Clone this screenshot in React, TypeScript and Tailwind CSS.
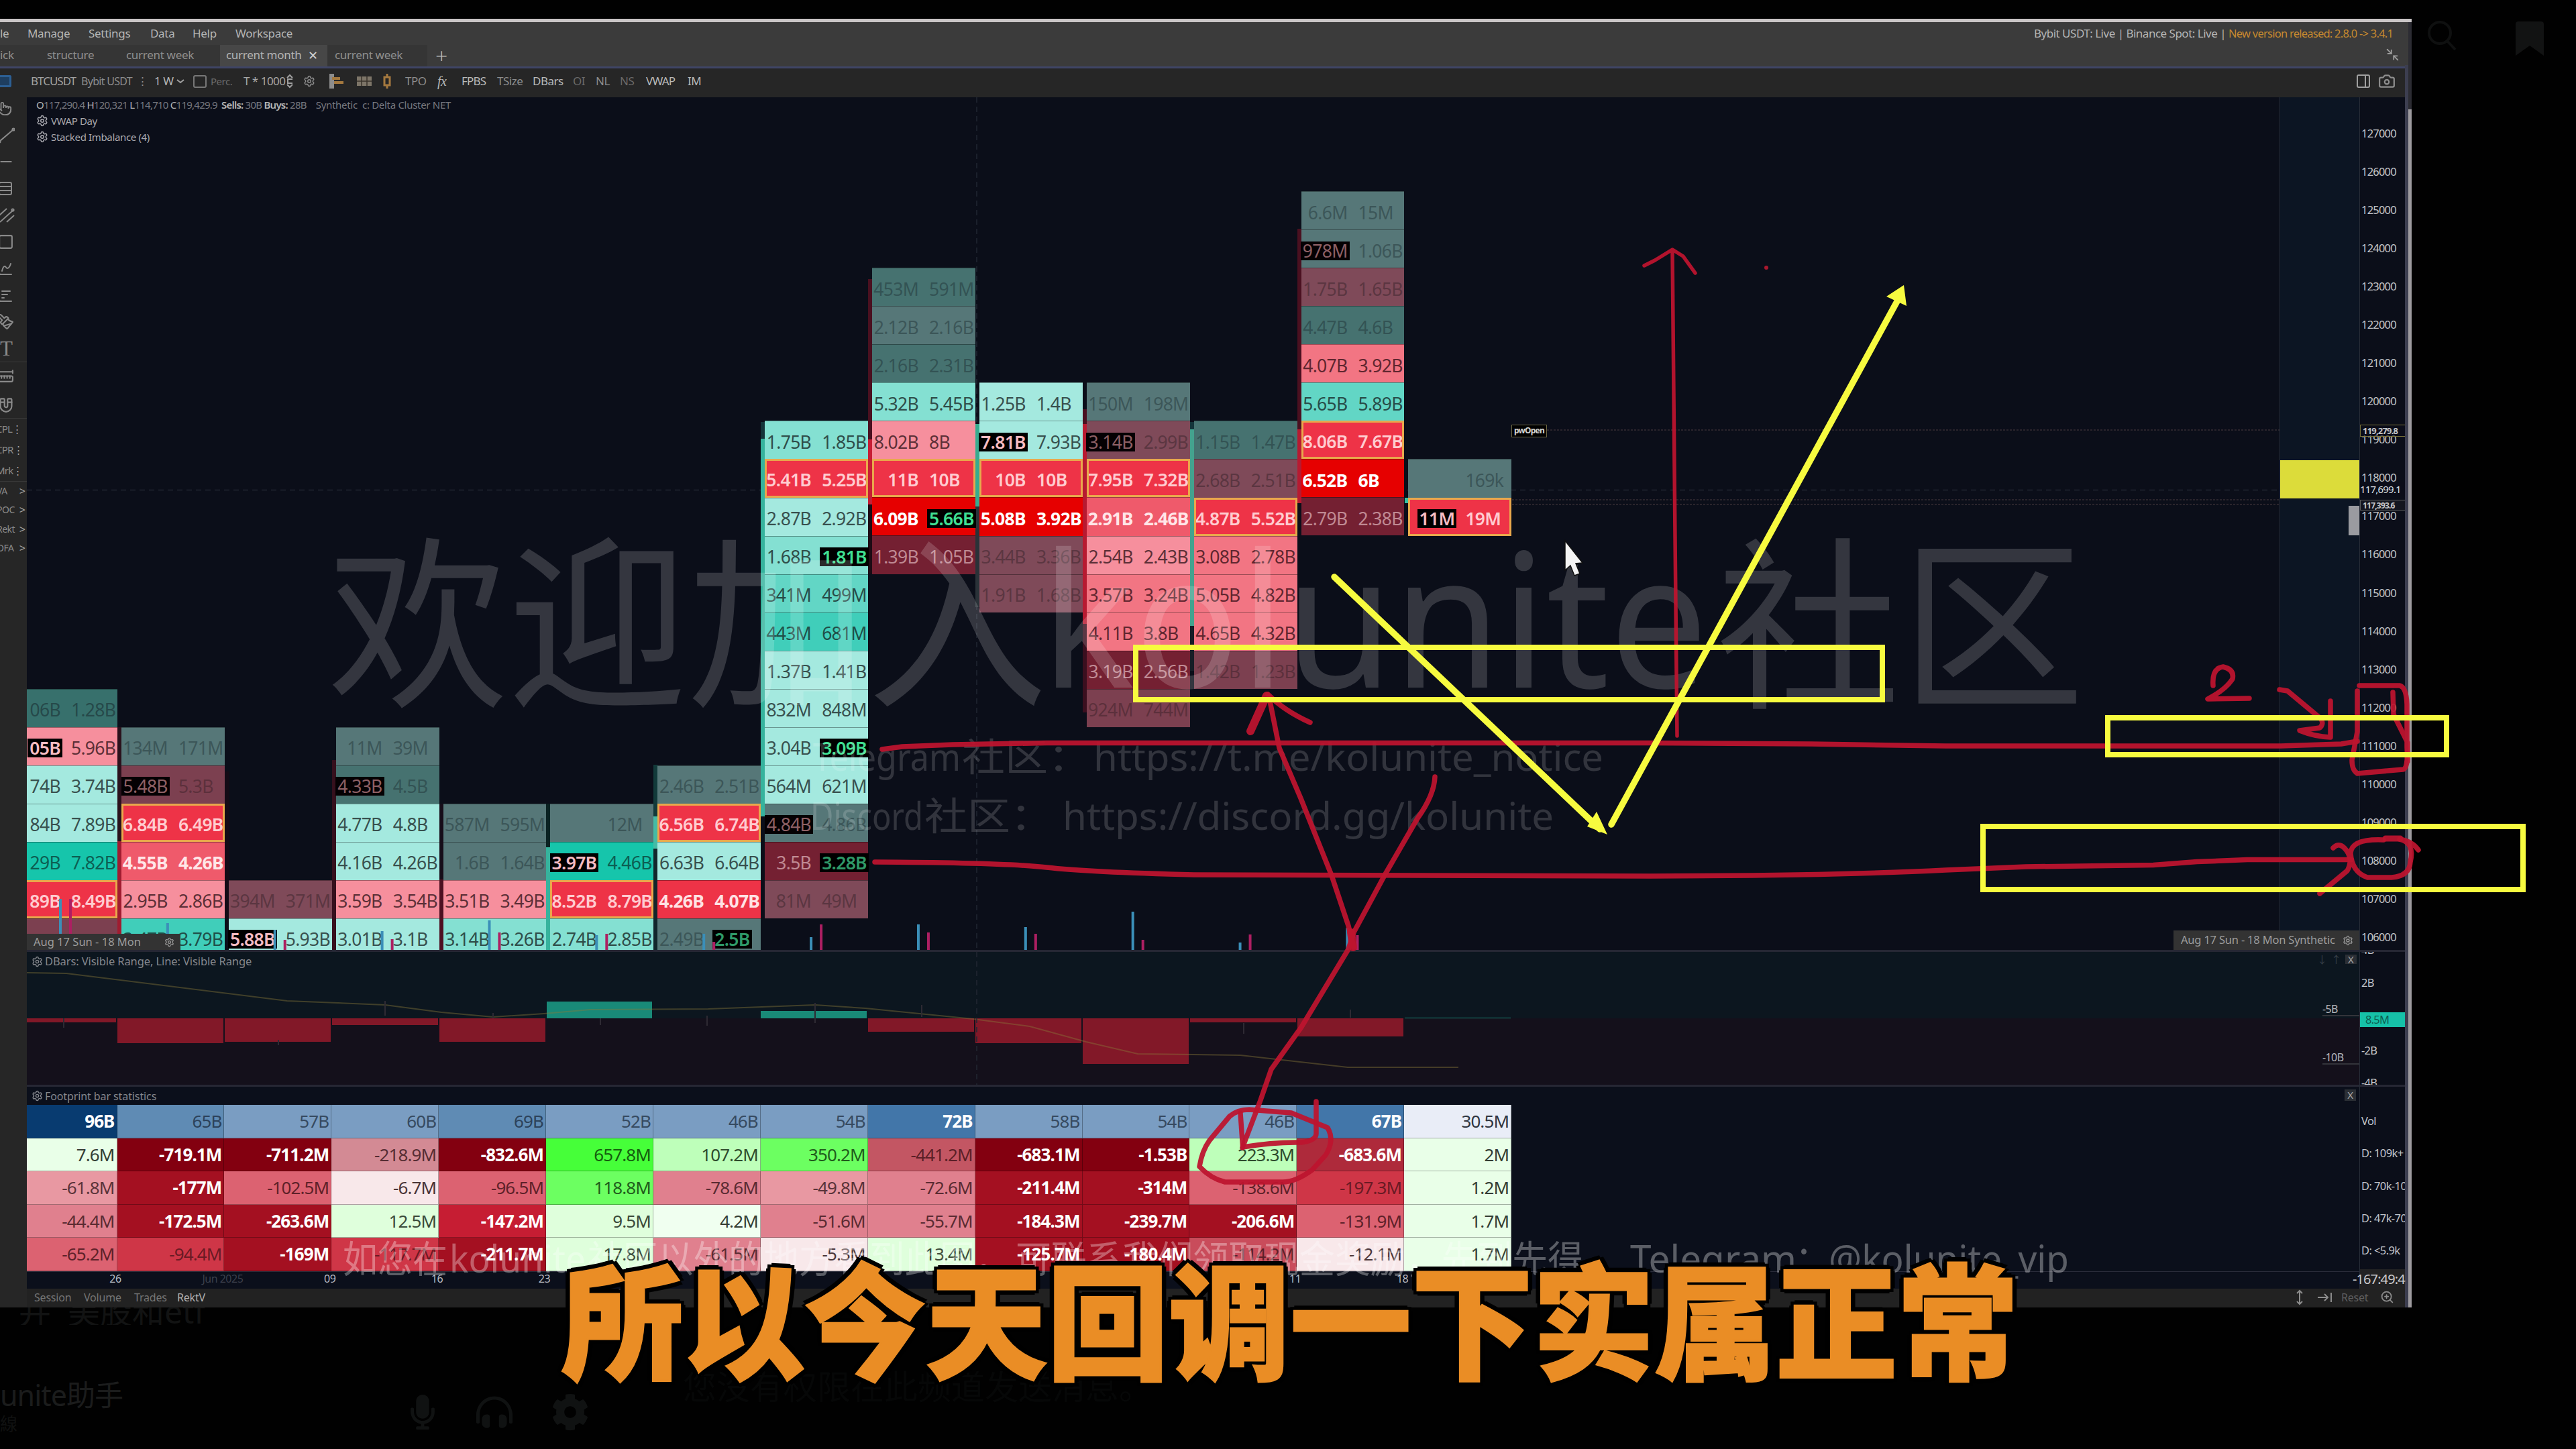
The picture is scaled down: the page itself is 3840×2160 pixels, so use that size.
import React from "react";
import {
  Pointer, Minus, Rows3, Square, Magnet, Settings, Camera,
  Minimize2, PanelRight, ZoomIn, Paintbrush, ChartSpline, RulerDimensionLine, ChartBarDecreasing,
} from "lucide-react";
import { FaMicrophone, FaHeadphonesAlt, FaCog } from "react-icons/fa";

const STYLE: Record<string, string> = {
  D0: "bg-[#37706c] text-[#26494a]",
  D1: "bg-[#567778] text-[#3c5658]",
  D2: "bg-[#467270] text-[#335354]",
  DP: "bg-[#7f4a59] text-[#5b3641]",
  DQ: "bg-[#7c4050] text-[#5c303c]",
  DR: "bg-[#742032] text-[#c08a94]",
  LT: "bg-[#a4e9df] text-[#38504e]",
  T2: "bg-[#84e0d2] text-[#2f4d49]",
  T3: "bg-[#62d6c5] text-[#274c48]",
  T4: "bg-[#40ceba] text-[#1f4e48]",
  TT: "bg-[#16c5ab] text-[#0c5f53]",
  P1: "bg-[#f68f9d] text-[#5c2f37]",
  P2: "bg-[#f27583] text-[#60262f]",
  P3: "bg-[#ef5a6b] text-[#ffe6e8] font-bold",
  RN: "bg-[#ee3347] text-[#ffe2e4] font-bold",
  RO: "bg-[#ee3347] text-[#ffccd0] font-semibold",
  PR: "bg-[#e60000] text-white font-bold",
};

const TAG: Record<string, string> = {
  w: "bg-black text-[#f6bcc2] font-semibold",
  d: "bg-[#050103] text-[#8e6065]",
  g: "bg-black text-[#3fe093] font-semibold",
  e: "bg-black text-[#2f9a68] font-semibold",
};

// [style, sell volume, buy volume, sell tag, buy tag]
type Cell = [string, string, string, string?, string?];
type Column = { start: number; cells: Cell[] };

const COLUMNS: Column[] = [
  { start: 13, cells: [["D0", "06B", "1.28B"], ["P1", "05B", "5.96B", "w"], ["LT", "74B", "3.74B"], ["LT", "84B", "7.89B"], ["TT", "29B", "7.82B"], ["RO", "89B", "8.49B"], ["DQ", "", ""]] },
  { start: 14, cells: [["D1", "134M", "171M"], ["DQ", "5.48B", "5.3B", "d"], ["RO", "6.84B", "6.49B"], ["P3", "4.55B", "4.26B"], ["P1", "2.95B", "2.86B"], ["T4", "3.47B", "3.79B"]] },
  { start: 18, cells: [["DP", "394M", "371M"], ["LT", "5.88B", "5.93B", "w"]] },
  { start: 14, cells: [["D1", "11M", "39M"], ["D2", "4.33B", "4.5B", "d"], ["LT", "4.77B", "4.8B"], ["LT", "4.16B", "4.26B"], ["P1", "3.59B", "3.54B"], ["LT", "3.01B", "3.1B"]] },
  { start: 16, cells: [["D1", "587M", "595M"], ["D1", "1.6B", "1.64B"], ["P1", "3.51B", "3.49B"], ["T2", "3.14B", "3.26B"]] },
  { start: 16, cells: [["D1", "", "12M"], ["TT", "3.97B", "4.46B", "w"], ["RO", "8.52B", "8.79B"], ["T2", "2.74B", "2.85B"]] },
  { start: 15, cells: [["D1", "2.46B", "2.51B"], ["RO", "6.56B", "6.74B"], ["LT", "6.63B", "6.64B"], ["RN", "4.26B", "4.07B"], ["D1", "2.49B", "2.5B", "", "e"]] },
  { start: 6, cells: [["T2", "1.75B", "1.85B"], ["RO", "5.41B", "5.25B"], ["LT", "2.87B", "2.92B"], ["T2", "1.68B", "1.81B", "", "g"], ["T3", "341M", "499M"], ["T4", "443M", "681M"], ["LT", "1.37B", "1.41B"], ["LT", "832M", "848M"], ["LT", "3.04B", "3.09B", "", "g"], ["LT", "564M", "621M"], ["D1", "4.84B", "4.86B", "d"], ["DR", "3.5B", "3.28B", "", "e"], ["DP", "81M", "49M"]] },
  { start: 2, cells: [["D2", "453M", "591M"], ["D1", "2.12B", "2.16B"], ["D2", "2.16B", "2.31B"], ["T2", "5.32B", "5.45B"], ["P1", "8.02B", "8B"], ["RO", "11B", "10B"], ["PR", "6.09B", "5.66B", "", "g"], ["DR", "1.39B", "1.05B"]] },
  { start: 5, cells: [["LT", "1.25B", "1.4B"], ["LT", "7.81B", "7.93B", "w"], ["RO", "10B", "10B"], ["PR", "5.08B", "3.92B"], ["DP", "3.44B", "3.36B"], ["DP", "1.91B", "1.68B"]] },
  { start: 5, cells: [["D1", "150M", "198M"], ["DP", "3.14B", "2.99B", "d"], ["RO", "7.95B", "7.32B"], ["P3", "2.91B", "2.46B"], ["P1", "2.54B", "2.43B"], ["P2", "3.57B", "3.24B"], ["P2", "4.11B", "3.8B"], ["DR", "3.19B", "2.56B"], ["DQ", "924M", "744M"]] },
  { start: 6, cells: [["D2", "1.15B", "1.47B"], ["DP", "2.68B", "2.51B"], ["RO", "4.87B", "5.52B"], ["P2", "3.08B", "2.78B"], ["P2", "5.05B", "4.82B"], ["P2", "4.65B", "4.32B"], ["DQ", "1.42B", "1.23B"]] },
  { start: 0, cells: [["D1", "6.6M", "15M"], ["D1", "978M", "1.06B", "d"], ["DP", "1.75B", "1.65B"], ["D2", "4.47B", "4.6B"], ["P2", "4.07B", "3.92B"], ["T3", "5.65B", "5.89B"], ["RO", "8.06B", "7.67B"], ["PR", "6.52B", "6B"], ["DR", "2.79B", "2.38B"]] },
  { start: 7, cells: [["D1", "", "169k"], ["RO", "11M", "19M", "w"]] },
];

const ROW = 57.04;

// [x, top, bottom, fill] of the narrow candle left of each profile
const CANDLES: [number, number, number, string][] = [
  [175, 1084, 1254, "#2a111c"], [175, 1254, 1416, "#a01c30"],
  [335, 1150, 1368, "#140b16"], [495, 1133, 1416, "#36101d"],
  [655, 1198, 1311, "#160d19"], [655, 1311, 1416, "#4d1021"],
  [814, 1198, 1263, "#0a2222"], [814, 1263, 1416, "#36b39d"],
  [974, 1140, 1217, "#123a3a"], [974, 1217, 1265, "#45bba5"], [974, 1265, 1416, "#12262c"],
  [1134, 629, 654, "#14343a"], [1134, 654, 1217, "#36b39d"],
  [1294, 416, 655, "#4a1020"], [1294, 655, 752, "#c71e35"], [1294, 752, 855, "#1d0b14"],
  [1454, 632, 755, "#37ab8f"], [1454, 755, 905, "#2a3238"],
  [1614, 610, 632, "#4a1020"], [1614, 632, 930, "#b71a31"], [1614, 930, 1062, "#3b0f1f"],
  [1774, 629, 640, "#14343a"], [1774, 640, 933, "#44a28e"], [1774, 933, 1000, "#161d26"],
  [1934, 341, 640, "#4a1020"], [1934, 640, 750, "#b71a31"],
  [2094, 742, 750, "#36c2a2"],
];

// [blue height, pink height] of the volume ticks under each profile
const TICKS: [number, number][] = [
  [76, 76], [40, 10], [30, 15], [28, 16], [44, 26], [22, 24], [24, 12],
  [19, 38], [38, 26], [34, 24], [57, 15], [11, 23], [33, 22],
];

const PRICES = Array.from({ length: 22 }, (_, i) => 127000 - i * 1000);

// signed heights of the delta bars
const DELTAS = [-6, -37, -35, -10, -35, 25, 0, 11, -20, -37, -68, -6, -27, 1];

const B1 = "bg-[#7a9dc2] text-[#364a60]";
const B2 = "bg-[#5f8bb4] text-[#2c425a]";
const B3 = "bg-[#4276a9] text-white font-bold";
const R5 = "bg-[#830010] text-white font-bold";
const R4 = "bg-[#a41021] text-white font-bold";
const R3 = "bg-[#cf3647] text-[#6a1a24]";
const R2 = "bg-[#dc6271] text-[#5e2129]";
const R1 = "bg-[#e0808e] text-[#5a2b32]";
const R0 = "bg-[#e898a2] text-[#5a3339]";
const W = "bg-[#e9ffe8] text-[#333d33]";
const G1 = "bg-[#dfffdc] text-[#3a4a39]";
const G2 = "bg-[#beffba] text-[#2f4c2d]";
const G3 = "bg-[#6cff61] text-[#215c1c]";
const G4 = "bg-[#46ff39] text-[#145d0e]";
const PW = "bg-[#f8e8ea] text-[#4a3538]";

const STATS: [string, string][][] = [
  [["96B", "bg-[#083b70] text-white font-bold"], ["65B", B2], ["57B", B1], ["60B", B1], ["69B", B2], ["52B", B1], ["46B", B1], ["54B", B1], ["72B", B3], ["58B", B1], ["54B", B1], ["46B", B1], ["67B", B3], ["30.5M", "bg-[#e9edf7] text-[#2f3540]"]],
  [["7.6M", W], ["-719.1M", R5], ["-711.2M", R5], ["-218.9M", "bg-[#d38a94] text-[#562d33]"], ["-832.6M", R5], ["657.8M", G4], ["107.2M", G2], ["350.2M", G3], ["-441.2M", "bg-[#c35663] text-[#5c1f27]"], ["-683.1M", R5], ["-1.53B", R5], ["223.3M", G2], ["-683.6M", "bg-[#ae2a3b] text-white font-bold"], ["2M", W]],
  [["-61.8M", R0], ["-177M", R4], ["-102.5M", R2], ["-6.7M", PW], ["-96.5M", R2], ["118.8M", G3], ["-78.6M", R1], ["-49.8M", R0], ["-72.6M", R1], ["-211.4M", R4], ["-314M", R4], ["-138.6M", R2], ["-197.3M", R3], ["1.2M", W]],
  [["-44.4M", R1], ["-172.5M", R4], ["-263.6M", R4], ["12.5M", G1], ["-147.2M", "bg-[#c61d33] text-white font-bold"], ["9.5M", G1], ["4.2M", "bg-[#f0fff0] text-[#333d33]"], ["-51.6M", R1], ["-55.7M", R1], ["-184.3M", R4], ["-239.7M", R4], ["-206.6M", R4], ["-131.9M", R2], ["1.7M", W]],
  [["-65.2M", R2], ["-94.4M", R3], ["-169M", R4], ["-117.7M", R3], ["-211.7M", R4], ["17.8M", G1], ["-61.5M", R1], ["-5.3M", PW], ["13.4M", G1], ["-125.7M", R4], ["-180.4M", R4], ["-114.2M", "bg-[#c94c5b] text-[#5c1f27]"], ["-12.1M", PW], ["1.7M", W]],
];

const DATES: [string, string][] = [
  ["26", "text-[#b9bcc4]"], ["Jun 2025", "text-[#3c3f4b]"], ["09", "text-[#b9bcc4]"], ["16", "text-[#b9bcc4]"],
  ["23", "text-[#b9bcc4]"], ["", ""], ["", ""], ["07", "text-[#b9bcc4]"], ["14", "text-[#b9bcc4]"], ["", ""],
  ["", ""], ["11", "text-[#b9bcc4]"], ["18", "text-[#b9bcc4]"],
];

function Slot({ w, children, className = "" }: { w: number; children?: React.ReactNode; className?: string }) {
  return (
    <div className={`shrink-0 whitespace-nowrap ${className}`} style={{ width: w }}>
      {children}
    </div>
  );
}

function ChannelIcon() {
  return (
    <svg width="26" height="26" viewBox="0 0 26 26" stroke="#8a8a8a" strokeWidth="2" fill="none">
      <path d="M2 14 14 3M4 23 24 5M14 23 25 13" />
      <circle cx="23" cy="5" r="1.6" />
    </svg>
  );
}

function SegmentIcon() {
  return (
    <svg width="26" height="26" viewBox="0 0 26 26" stroke="#8a8a8a" strokeWidth="2" fill="none">
      <path d="M3 22 24 4" />
      <circle cx="24" cy="4" r="1.6" />
      <circle cx="3" cy="22" r="1.6" />
    </svg>
  );
}

function Header() {
  return (
    <div className="h-[66px] shrink-0 bg-[#3b3b3b] text-[16px]">
      <div className="flex h-[34px] items-center leading-[34px] text-[17px] tracking-[-0.3px] text-[#b5b5b5]">
        <Slot w={41}>le</Slot>
        <Slot w={91}>Manage</Slot>
        <Slot w={92}>Settings</Slot>
        <Slot w={63}>Data</Slot>
        <Slot w={64}>Help</Slot>
        <div className="flex-1">Workspace</div>
        <Slot w={290} className="tracking-[-0.5px]">Bybit USDT: Live | Binance Spot: Live |</Slot>
        <Slot w={263} className="text-[16.5px] tracking-[-0.75px] text-[#c5892f]">New version released: 2.8.0 -&gt; 3.4.1</Slot>
      </div>
      <div className="flex h-[32px] items-center leading-[30px] text-[17px] tracking-[-0.3px] text-[#8f8f8f]">
        <div className="flex h-full bg-[#353535]">
          <Slot w={70}>ick</Slot>
          <Slot w={118}>structure</Slot>
          <Slot w={140}>current week</Slot>
          <div className="flex h-full w-[160px] gap-[10px] bg-[#474747] pl-[9px] text-[#b4b4b4]">
            current month<span className="text-[18px] text-[#d0d0d0]">✕</span>
          </div>
          <Slot w={149} className="pl-[11px]">current week</Slot>
        </div>
        <div className="flex-1 pl-[12px] text-[32px] font-light text-[#b4b4b4]">+</div>
        <Minimize2 size={21} color="#a0a0a0" className="mr-[8px] mb-[4px] -scale-x-100" />
      </div>
    </div>
  );
}

function Toolbar() {
  return (
    <div className="flex h-[46px] shrink-0 items-center border-t-[3px] border-[#3f4566] bg-[#262626] pb-[5px] text-[17px] leading-[38px] tracking-[-0.5px] text-[#8d8d8d]">
      <div className="flex w-[46px] shrink-0 items-center">
        <div className="h-[18px] w-[17px] rounded-r-[3px] border-[3px] border-l-0 border-[#2c5f94] bg-[#1e3e60]" />
      </div>
      <Slot w={75} className="text-[17px] tracking-[-1px] text-[#a2a2a2]">BTCUSDT</Slot>
      <Slot w={83} className="text-[16px] tracking-[-0.7px]">Bybit USDT</Slot>
      <Slot w={26}>⋮</Slot>
      <Slot w={31} className="text-[#b5b5b5]">1 W</Slot>
      <Slot w={27}>
        <svg width="16" height="10" viewBox="0 0 16 10"><path d="M3 3l5 4 5-4" fill="none" stroke="#a0a0a0" strokeWidth="2" /></svg>
      </Slot>
      <Slot w={26}><div className="h-[19px] w-[20px] rounded-[3px] border-2 border-[#777]" /></Slot>
      <Slot w={49} className="text-[15px] text-[#6a6a6a]">Perc.</Slot>
      <Slot w={64} className="text-[#a8a8a8]">T * 1000</Slot>
      <Slot w={25}>
        <svg width="14" height="24" viewBox="0 0 14 24" className="-ml-[2px]"><path d="M3 7l4-4 4 4M3 17l4 4 4-4M11 9H4v6h7" fill="none" stroke="#a0a0a0" strokeWidth="2" /></svg>
      </Slot>
      <Slot w={38}><Settings size={18} /></Slot>
      <Slot w={42}>
        <svg width="24" height="26" viewBox="0 0 24 26"><path d="M1 2h7v22H1z" fill="#8d8d8d" /><path d="M5 7h12v4H5zM8 13h14v4H8z" fill="#a5793f" /></svg>
      </Slot>
      <Slot w={38}>
        <svg width="22" height="16" viewBox="0 0 22 16"><path d="M0 1h22v14H0z" fill="#7d7568" /><path d="M0 8h22M7 1v14M15 1v14" stroke="#3a332b" strokeWidth="1.5" /></svg>
      </Slot>
      <Slot w={34}>
        <svg width="14" height="24" viewBox="0 0 14 24"><path d="M3 6h8v12H3zM7 1v5M7 18v5" fill="none" stroke="#a5793f" strokeWidth="3" /></svg>
      </Slot>
      <Slot w={48}>TPO</Slot>
      <Slot w={36} className="font-['Liberation_Serif'] text-[20px] italic text-[#b5b5b5]">fx</Slot>
      <Slot w={53} className="text-[#b9b9b9] tracking-[-0.8px]">FPBS</Slot>
      <Slot w={53}>TSize</Slot>
      <Slot w={60} className="text-[#b9b9b9]">DBars</Slot>
      <Slot w={34} className="text-[#6a6a6a]">OI</Slot>
      <Slot w={36}>NL</Slot>
      <Slot w={39} className="text-[#6a6a6a]">NS</Slot>
      <Slot w={62} className="text-[#b9b9b9] tracking-[-0.8px]">VWAP</Slot>
      <div className="flex-1 text-[#b9b9b9]">IM</div>
      <PanelRight size={24} color="#a0a0a0" className="mr-[10px]" />
      <Camera size={26} color="#8f8f8f" className="mr-[14px]" />
    </div>
  );
}

function SideBar() {
  const tools = [
    <Pointer key="p" size={22} />, <SegmentIcon key="s" />, <Minus key="m" size={26} />, <Rows3 key="r" size={24} />,
    <ChannelIcon key="c" />, <Square key="q" size={25} />, <ChartSpline key="w" size={24} />,
    <ChartBarDecreasing key="d" size={24} />, <Paintbrush key="b" size={25} className="-scale-x-100" />,
    <span key="t" className="pl-[4px] font-['Liberation_Serif'] text-[31px] leading-none">T</span>,
  ];
  return (
    <div className="w-[40px] shrink-0 overflow-hidden bg-[#262626] text-[#8a8a8a]">
      <div className="-mt-[3px]">
        {tools.map((tool, i) => (
          <div key={i} className="-ml-[4px] flex h-[39.7px] items-center">{tool}</div>
        ))}
      </div>
      <div className="border-t border-[#3a3a3a]" />
      <div className="-ml-[4px] flex h-[42px] items-center"><RulerDimensionLine size={25} /></div>
      <div className="-ml-[4px] flex h-[41px] items-center"><Magnet size={26} className="rotate-135" /></div>
      <div className="border-y border-[#3a3a3a] text-[15px] leading-[31px]">
        {["CPL", "CPR", "Mrk"].map((t) => (
          <div key={t} className="flex h-[31px] justify-between pr-[7px]">
            <span className="-ml-[6px] tracking-[-0.8px]">{t}</span>
            <span className="text-[#a5a5a5]">⋮</span>
          </div>
        ))}
      </div>
      <div className="text-[14px] leading-[28.5px]">
        {["VA", "POC", "Rekt", "OFA"].map((t) => (
          <div key={t} className="flex h-[28.5px] justify-between pr-[2px]">
            <span className="-ml-[5px] tracking-[-0.5px]">{t}</span>
            <span className="text-[16px] text-[#a5a5a5]">&gt;</span>
          </div>
        ))}
      </div>
    </div>
  );
}

function FootprintCell({ cell }: { cell: Cell }) {
  const [style, sell, buy, sellTag, buyTag] = cell;
  return (
    <div
      className={`relative flex h-[57.04px] shrink-0 items-center gap-[16px] pt-[5px] text-[26.5px] leading-[28px] tracking-[-0.7px] whitespace-nowrap ${STYLE[style]} ${
        style === "RO" ? "outline-[3px] -outline-offset-3 outline-[#e9a84c]" : "border-t border-black/35"
      }`}
    >
      <div className="flex w-[69px] shrink-0 justify-end">
        <span className={sellTag ? `-mx-[3px] shrink-0 px-[3px] ${TAG[sellTag]}` : "shrink-0"}>{sell}</span>
      </div>
      <span className={buyTag ? `-ml-[3px] shrink-0 px-[3px] ${TAG[buyTag]}` : "shrink-0"}>{buy}</span>
    </div>
  );
}

function Chart() {
  return (
    <div className="relative flex h-[1271px] shrink-0 overflow-hidden bg-[#0b0e19]">
      <svg className="absolute inset-0" width="3477" height="1271" viewBox="40 145 3477 1271">
        <path d="M1456 145V1416M40 730.5H3517" stroke="#222733" strokeWidth="1.5" strokeDasharray="8 6" />
        <path d="M2306 641H3517M2254 745H3517M2254 752H3517" stroke="#2a242c" strokeWidth="2" strokeDasharray="3 2" />
        {CANDLES.map(([x, top, bottom, fill], i) => (
          <rect key={i} x={x} y={top} width="6.5" height={bottom - top} fill={fill} />
        ))}
      </svg>
      <div className="-ml-[19px] flex w-[3377px] shrink-0 items-start gap-[6px]">
        {COLUMNS.map((column, i) => (
          <div key={i} className="relative w-[153.88px] shrink-0" style={{ marginTop: 140.2 + column.start * ROW }}>
            {column.cells.map((cell, j) => (
              <FootprintCell key={j} cell={cell} />
            ))}
          </div>
        ))}
      </div>
      <div className="relative h-full w-[119px] border-l border-[#232b38] bg-[#0c1523] pt-[541px]">
        <div className="h-[57px] bg-[#dcdc3a]" />
      </div>
      <div className="absolute top-[5px] left-[14px] text-[15px] leading-[20px] text-[#a8a8ae]">
        <div className="mb-[6px] flex h-[12px] items-center gap-[6px] text-[15px] tracking-[-0.75px] whitespace-nowrap text-[#77787f]">
          <span>
            <span className="text-[#b5b5b5]">O</span>117,290.4 <span className="text-[#b5b5b5]">H</span>120,321{" "}
            <span className="text-[#b5b5b5]">L</span>114,710 <span className="text-[#b5b5b5]">C</span>119,429.9
          </span>
          <span><span className="font-semibold text-[#b5b5b5]">Sells:</span> 30B <span className="font-semibold text-[#b5b5b5]">Buys:</span> 28B</span>
          <span className="ml-[8px] tracking-[-0.3px]">Synthetic&nbsp; c: Delta Cluster NET</span>
        </div>
        <div className="flex h-[24px] items-center gap-[4px] tracking-[-0.4px]"><Settings size={18} />VWAP Day</div>
        <div className="flex h-[23px] items-center gap-[4px] tracking-[-0.35px]"><Settings size={18} />Stacked Imbalance (4)</div>
      </div>
      <div className="absolute top-[488px] left-[2213px] h-[19px] w-[53px] border border-[#6f6a45] bg-black text-center text-[12px] leading-[16px] font-bold tracking-[-0.8px] text-[#d5d5d5]">
        pwOpen
      </div>
      <div className="absolute bottom-0 left-0 flex h-[24px] w-[229px] items-center justify-between bg-[#333333] pr-[9px] pl-[10px] text-[16.5px] text-[#9c9c9c]">
        Aug 17 Sun - 18 Mon <Settings size={15} />
      </div>
      <div className="absolute right-0 bottom-0 flex h-[29px] w-[277px] items-center justify-between bg-[#333333] pr-[9px] pl-[11px] text-[16.5px] tracking-[-0.2px] text-[#9c9c9c]">
        Aug 17 Sun - 18 Mon Synthetic <Settings size={16} />
      </div>
    </div>
  );
}

function DeltaPanel() {
  return (
    <div className="relative h-[204px] shrink-0 border-y-[3px] border-[#262734] bg-[linear-gradient(#0c161f_0_98.5px,#14101b_98.5px)]">
      <div className="flex items-start">
        {DELTAS.map((d, i) => (
          <div
            key={i}
            className={`shrink-0 ${i === 0 ? "w-[133px] mr-[2px]" : "w-[157.9px] mr-[2px]"} ${d < 0 ? "bg-[#821828]" : "bg-[#198a78]"}`}
            style={{ height: Math.abs(d), marginTop: d < 0 ? 98.5 : 98.5 - d }}
          />
        ))}
      </div>
      <svg className="absolute inset-0" width="3477" height="198" viewBox="40 1419 3477 198">
        <path
          d="M40 1450 99 1451 428 1492 574 1498 658 1509 735 1516 811 1511 880 1505 1056 1504 1215 1498 1290 1503 1451 1519 1535 1530 1619 1553 1696 1571 1849 1573 2009 1591 2174 1591"
          fill="none" stroke="#8a7a3a" strokeOpacity="0.42" strokeWidth="2"
        />
        <path d="M95 1518v14M415 1550v8M574 1492v22M735 1510v8M895 1518v10M1054 1514v15M1215 1495v30M1374 1498v18M1854 1525v16M2013 1505v12" stroke="#2e2a33" strokeWidth="2" />
        <path d="M3462 1514h55M3462 1586h55" stroke="#33343a" strokeWidth="2" />
        <path d="M1456 1419V1617" stroke="#222733" strokeWidth="1.5" strokeDasharray="8 6" />
      </svg>
      <div className="absolute top-[3px] left-[7px] flex items-center gap-[3px] text-[16.5px] tracking-[-0.1px] leading-[22px] text-[#85878d]">
        <Settings size={17} />DBars: Visible Range, Line: Visible Range
      </div>
      <div className="absolute top-[4px] right-[4px] flex gap-[6px] text-[15px] leading-[14px] text-[#3b424a]">
        <span>↓</span><span>↑</span><span className="w-[17px] bg-[#2b2f35] text-center text-[#a5a5a5]">X</span>
      </div>
      <div className="absolute top-[74px] right-[4px] flex w-[51px] flex-col gap-[50px] text-[16px] leading-[22px] tracking-[-0.6px] text-[#b5b7bc]">
        <span>-5B</span><span>-10B</span>
      </div>
    </div>
  );
}

function StatsPanel() {
  return (
    <div className="relative flex-1 bg-[#0b0f1b]">
      <div className="flex h-[27px] items-center gap-[3px] pl-[7px] text-[16px] tracking-[-0.1px] text-[#85878d]">
        <Settings size={17} />
        <span className="flex-1">Footprint bar statistics</span>
        <span className="mr-[5px] mb-[2px] h-[17px] w-[17px] bg-[#2b2f35] text-center text-[15px] leading-[16px] text-[#a5a5a5]">X</span>
      </div>
      {STATS.map((row, i) => (
        <div key={i} className="flex h-[49.5px]">
          {row.map(([text, style], j) => (
            <div
              key={j}
              className={`flex shrink-0 items-center justify-end border-r border-b border-black/30 pr-[3px] text-[26px] leading-none tracking-[-0.9px] ${
                j === 0 ? "w-[134.5px]" : "w-[159.9px]"
              } ${style}`}
            >
              {text}
            </div>
          ))}
        </div>
      ))}
      <div className="flex h-[25px] items-center border-t border-[#2a2c3a] pb-[3px] pl-[52px] text-[16px] tracking-[-0.5px]">
        {DATES.map(([text, tone], i) => (
          <div key={i} className={`w-[159.9px] shrink-0 text-center ${tone}`}>{text}</div>
        ))}
      </div>
    </div>
  );
}

function Axis() {
  return (
    <div className="flex w-[68px] shrink-0 flex-col border-l border-[#262b36] bg-[#0b0e19] text-[16.5px] tracking-[-0.8px] whitespace-nowrap text-[#c3c5ca]">
      <div className="relative h-[1271px] shrink-0 overflow-hidden pt-[26px] pl-[2px]">
        {PRICES.map((p) => (
          <div key={p} className="flex h-[57.04px] items-center">{p}</div>
        ))}
        <div className="absolute top-[488px] left-0 h-[18px] w-[70px] border border-[#7b7439] bg-[#0b0e19]/60 pl-[3px] text-[13px] leading-[17px] font-bold">119,279.8</div>
        <div className="absolute top-[574px] left-0 h-[20px] w-[70px] bg-[#0b0e19]/80 text-[15px] leading-[20px] text-[#dfe0e4]">117,699.1</div>
        <div className="absolute top-[600px] left-0 h-[16px] w-[70px] border border-[#5d5d5d] bg-[#14161f] pl-[3px] text-[12px] leading-[15px] font-bold">117,393.6</div>
      </div>
      <div className="relative h-[204px] shrink-0 overflow-hidden border-y-[3px] border-[#262734] pl-[2px] leading-[20px]">
        <div className="-mt-[13px] h-[20px]">4B</div>
        <div className="mt-[29px]">2B</div>
        <div className="mt-[34px] -ml-[2px] h-[22px] bg-[#16c1a8] pl-[8px] leading-[22px] text-[#0d5c51]">8.5M</div>
        <div className="mt-[25px]">-2B</div>
        <div className="mt-[28px] h-[13px] overflow-hidden">-4B</div>
      </div>
      <div className="flex-1 overflow-hidden pt-[27px] pl-[2px] leading-[48.3px] tracking-[-0.6px]">
        <div>Vol</div>
        <div>D: 109k+</div>
        <div>D: 70k-10</div>
        <div>D: 47k-70</div>
        <div>D: &lt;5.9k</div>
      </div>
      <div className="h-[29px] shrink-0 bg-[#222223] text-[20px] leading-[30px] tracking-[-0.9px] text-[#c9c9cc]">
        <div className="relative -ml-[11px] w-[90px]">-167:49:4</div>
      </div>
    </div>
  );
}

function BottomBar() {
  return (
    <div className="flex h-[28px] shrink-0 items-center bg-[#222222] pb-[3px] pl-[11px] text-[16px] leading-[24px] tracking-[-0.2px] text-[#747474]">
      <Slot w={74}>Session</Slot>
      <Slot w={75}>Volume</Slot>
      <Slot w={64}>Trades</Slot>
      <div className="flex-1 text-[#b0b0b0]">RektV</div>
      <svg width="14" height="24" viewBox="0 0 14 24" className="mr-[20px] -ml-[4px]"><path d="M7 2v20M3 6l4-4 4 4M3 18l4 4 4-4" fill="none" stroke="#8d8d8d" strokeWidth="2" /></svg>
      <svg width="22" height="16" viewBox="0 0 22 16" className="mr-[13px]"><path d="M0 8h15M10 3l5 5-5 5M20 1v14" fill="none" stroke="#8d8d8d" strokeWidth="2" /></svg>
      <Slot w={58} className="text-[#5e5e5e]">Reset</Slot>
      <ZoomIn size={21} color="#8d8d8d" className="mr-[16px]" />
    </div>
  );
}

function Watermarks() {
  const cjk = "'Noto Sans','Noto Sans CJK SC',sans-serif";
  return (
    <g fill="#ffffff" fontFamily={cjk}>
      <g fillOpacity="0.17" fontSize="278">
        <text x="489" y="1033" fontSize="276" textLength="1072" lengthAdjust="spacingAndGlyphs">欢迎加入</text>
        <text x="1552" y="1025" textLength="994" lengthAdjust="spacingAndGlyphs">kolunite</text>
        <text x="2558" y="1035" fontSize="276" textLength="550" lengthAdjust="spacingAndGlyphs">社区</text>
      </g>
      <g fillOpacity="0.16" fontSize="57">
        <text x="1212" y="1149" textLength="220" lengthAdjust="spacingAndGlyphs">Telegram</text>
        <text x="1434" y="1149" textLength="192" lengthAdjust="spacingAndGlyphs">社区：</text>
        <text x="1630" y="1149" textLength="760" lengthAdjust="spacingAndGlyphs">https://t.me/kolunite_notice</text>
        <text x="1208" y="1237" textLength="168" lengthAdjust="spacingAndGlyphs">Discord</text>
        <text x="1378" y="1237" textLength="192" lengthAdjust="spacingAndGlyphs">社区：</text>
        <text x="1584" y="1237" textLength="732" lengthAdjust="spacingAndGlyphs">https://discord.gg/kolunite</text>
      </g>
      <g fillOpacity="0.33" fontSize="56">
        <text x="511" y="1897" textLength="156" lengthAdjust="spacingAndGlyphs">如您在</text>
        <text x="670" y="1897" textLength="203" lengthAdjust="spacingAndGlyphs">kolunite</text>
        <text x="876" y="1897" textLength="630" lengthAdjust="spacingAndGlyphs">社区以外的地方看到此图，</text>
        <text x="1514" y="1897" textLength="846" lengthAdjust="spacingAndGlyphs">可联系我们领取现金奖励，先到先得</text>
        <text x="2430" y="1897" textLength="248" lengthAdjust="spacingAndGlyphs">Telegram</text>
        <text x="2676" y="1897" textLength="52" lengthAdjust="spacingAndGlyphs">：</text>
        <text x="2726" y="1897" textLength="358" lengthAdjust="spacingAndGlyphs">@kolunite_vip</text>
      </g>
    </g>
  );
}

function Annotations() {
  return (
    <svg className="absolute inset-0" width="3840" height="2160" viewBox="0 0 3840 2160">
      {TICKS.map(([blue, pink], i) => {
        const x = 90 + i * 159.87;
        const base = i < 2 ? 1392 : 1416;
        return (
          <g key={i}>
            <rect x={x - 2} y={1416 - blue} width="4" height={Math.max(0, blue - (1416 - base))} fill="#3b8fb8" />
            <rect x={x + 13} y={1416 - pink} width="4" height={Math.max(0, pink - (1416 - base))} fill="#ad1f62" />
          </g>
        );
      })}
      <rect x="3501" y="754" width="16" height="44" fill="#9a9ba0" />
      <Watermarks />
      <g fill="none" stroke="#bd142f" strokeOpacity="0.94" strokeWidth="7.5" strokeLinecap="round" strokeLinejoin="round">
        <path d="M1315 1117 1345 1113 1420 1110 1560 1107.5H2460L2700 1109 2900 1112H3400L3490 1109 3514 1105" />
        <path d="M1304 1285Q1500 1286 1560 1293T1780 1304L2460 1306Q2750 1305 2900 1297L3020 1292 3210 1289.600 3275 1284.600 3350 1281.500H3505" />
        <path d="M2139 1158Q2138 1185 2113 1220L2065 1303 2018 1390 2010 1415 1940 1531 1895 1594 1879 1640 1852 1711" />
        <path d="M1849 1659 1852.600 1710Q1900 1702 1940 1703 1962 1700 1962 1690V1642" />
        <path d="M2018 1412 2010 1380 1985 1305 1939 1190 1907 1115 1892 1040" />
        <path d="M1890 1035Q1915 1060 1953 1077" />
        <path d="M1864 1090 1888 1037" strokeWidth="12" />
        <path d="M2014 1390 2017 1412" strokeWidth="12" />
        <path d="M1788 1739Q1792 1715 1803 1700L1833 1664Q1845 1654 1862 1654L1925 1659 1979 1681Q1990 1700 1976 1722L1956 1744Q1930 1763 1910 1762H1826Q1805 1757 1788 1739Z" />
        <path d="M2500 1097 2497 800 2493 374M2451 396 2467 388 2493 372 2509 382 2527 407" strokeWidth="5.5" />
        <path d="M3299 1022Q3297 996 3314 994 3331 998 3328 1012 3318 1028 3291 1042L3353 1041" />
        <path d="M3398 1028 3410 1030 3452 1065Q3468 1076 3458 1085L3428 1089Q3450 1098 3474 1099V1045" />
        <path d="M3517 1022H3577Q3587 1024 3588 1050V1114Q3590 1146 3582 1147L3514 1153Q3506 1148 3506 1133L3514 1091V1030M3567 1032 3568 1065 3589 1107V1135" />
        <path d="M3478 1264Q3488 1254 3498 1268 3508 1282 3499 1298L3458 1332M3553 1252Q3505 1250 3504 1272 3506 1300 3529 1308H3565Q3592 1306 3593 1285 3600 1256 3577 1251 3596 1254 3605 1267" />
        <path d="M3556 1250H3578" strokeWidth="9" />
      </g>
      <circle cx="2633" cy="399" r="3" fill="#a8182e" />
      <g fill="none" stroke="#f7fb3f" strokeWidth="9.5" strokeLinecap="round">
        <path d="M1989 860 2385 1236M2402 1229 2833 440" />
      </g>
      <path d="M2396 1244 2366 1232 2380 1210ZM2838 425 2842 456 2812 442Z" fill="#f7fb3f" />
      <path d="M2333 806v44l8-7 6 15 8-3-6-15 10-1Z" fill="#f4f4f4" stroke="#111" strokeWidth="1.5" />
    </svg>
  );
}

export default function App() {
  return (
    <div className="relative h-[2160px] w-[3840px] overflow-hidden bg-[#010101] pt-[28px] font-['Noto_Sans','Noto_Sans_CJK_SC',sans-serif]">
      <div className="flex h-[1921px] w-[3595px] flex-col border-t-[5px] border-[#c9c5c6]">
        <div className="flex min-h-0 flex-1">
          <div className="flex w-[3585px] shrink-0 flex-col">
            <Header />
            <Toolbar />
            <div className="flex min-h-0 flex-1">
              <SideBar />
              <div className="flex min-w-0 flex-1 flex-col">
                <div className="flex min-h-0 flex-1">
                  <div className="flex w-[3477px] shrink-0 flex-col">
                    <Chart />
                    <DeltaPanel />
                    <StatsPanel />
                  </div>
                  <Axis />
                </div>
                <BottomBar />
              </div>
            </div>
          </div>
          <div className="w-[5px] bg-[linear-gradient(#3b3b3b_0_64px,#3c3e50_64px)]" />
          <div className="w-[5px] bg-[linear-gradient(#2c2c33_0_130px,#9d9a9e_130px)]" />
        </div>
      </div>

      <div className="flex h-[211px] flex-col justify-between overflow-hidden">
        <div className="h-[26px] overflow-hidden pl-[28px] text-[48px] leading-[12px] text-[#121313]">并&nbsp; 美股和etf</div>
        <div className="flex h-[150px] items-center text-[#1b1c1c]">
          <div className="w-[609px] pt-[30px]">
            <div className="text-[43px] leading-[44px] tracking-[-1px]">unite助手</div>
            <div className="text-[26px] leading-[40px] text-[#101111]">線</div>
          </div>
          <div className="flex items-center gap-[60px] pt-[40px] text-[#101212]">
            <FaMicrophone size={52} className="-mr-[1px] w-[42px]" />
            <FaHeadphonesAlt size={54} className="-mr-[2px]" />
            <FaCog size={56} />
          </div>
          <div className="pb-[36px] pl-[140px] text-[50px] leading-none text-[#060707]">您没有权限在此频道发送消息。</div>
        </div>
      </div>

      <div className="absolute top-[30px] right-[48px] flex items-start gap-[88px]">
        <svg width="44" height="48" viewBox="0 0 44 48" fill="none" stroke="#0f1010" strokeWidth="4">
          <circle cx="19" cy="19" r="16" />
          <path d="M30 31 42 44" />
        </svg>
        <svg width="42" height="54" viewBox="0 0 42 54" fill="#121313">
          <path d="M4 2h34q4 0 4 4v47L21 38 0 53V6q0-4 4-4Z" />
        </svg>
      </div>

      <Annotations />

      <div className="absolute top-[961px] left-[1689px] h-[86px] w-[1121px] border-[8px] border-[#f7fb3f]" />
      <div className="absolute top-[1066px] left-[3138px] h-[63px] w-[513px] border-[8px] border-[#f7fb3f]" />
      <div className="absolute top-[1228px] left-[2952px] h-[102px] w-[813px] border-[8px] border-[#f7fb3f]" />

      <div className="absolute top-[1870px] left-[837px] origin-center scale-y-[1.03] text-[181px] leading-[200px] font-black whitespace-nowrap text-[#ea8d25] [-webkit-text-stroke:3px_#ea8d25] [text-shadow:8px_0_#000,-8px_0_#000,0_8px_#000,0_-8px_#000,6px_6px_#000,-6px_6px_#000,6px_-6px_#000,-6px_-6px_#000]">
        所以今天回调一下实属正常
      </div>
    </div>
  );
}
